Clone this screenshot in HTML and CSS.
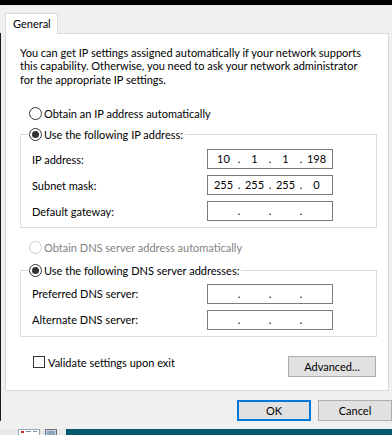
FILE: index.html
```html
<!DOCTYPE html>
<html lang="en">
<head>
<meta charset="utf-8">
<title>IPv4 Properties</title>
<link rel="stylesheet" href="styles.css">
</head>
<body>
<div class="topbar"></div>
<div class="tabs"><div class="tab">General</div></div>
<div class="main">
  <div class="panel">
    <p class="intro">You can get IP settings assigned automatically if your network supports<br>this capability. Otherwise, you need to ask your network administrator<br>for the appropriate IP settings.</p>
    <div class="opt first"><span class="radio"></span><span>Obtain an IP address automatically</span></div>
    <fieldset class="group g1">
      <legend class="opt"><span class="radio on"></span><span>Use the following IP address:</span></legend>
      <div class="row"><span>IP address:</span>
        <div class="ip"><span>10</span><span>.</span><span>1</span><span>.</span><span>1</span><span>.</span><span>198</span></div></div>
      <div class="row"><span>Subnet mask:</span>
        <div class="ip"><span>255</span><span>.</span><span>255</span><span>.</span><span>255</span><span>.</span><span>0</span></div></div>
      <div class="row"><span>Default gateway:</span>
        <div class="ip"><span></span><span>.</span><span></span><span>.</span><span></span><span>.</span><span></span></div></div>
    </fieldset>
    <div class="opt dis"><span class="radio off"></span><span>Obtain DNS server address automatically</span></div>
    <fieldset class="group g2">
      <legend class="opt"><span class="radio on"></span><span>Use the following DNS server addresses:</span></legend>
      <div class="row"><span>Preferred DNS server:</span>
        <div class="ip"><span></span><span>.</span><span></span><span>.</span><span></span><span>.</span><span></span></div></div>
      <div class="row"><span>Alternate DNS server:</span>
        <div class="ip"><span></span><span>.</span><span></span><span>.</span><span></span><span>.</span><span></span></div></div>
    </fieldset>
    <div class="bottomrow">
      <div class="opt check"><span class="box"></span><span>Validate settings upon exit</span></div>
      <button class="btn adv">Advanced...</button>
    </div>
  </div>
  <div class="footer">
    <button class="btn ok">OK</button>
    <button class="btn">Cancel</button>
  </div>
</div>
<div class="taskbar">
  <div class="tb-left">
    <svg class="tb-icon1" width="22" height="6" viewBox="0 0 22 6"><rect x="0.5" y="0.5" width="21" height="6" fill="#fff" stroke="#9aa4b0"/><rect x="3" y="2" width="3" height="2" fill="#c62828"/><rect x="8" y="2" width="5" height="1" fill="#7d8fa3"/><rect x="15" y="2" width="4" height="1" fill="#7d8fa3"/></svg>
    <svg class="tb-icon2" width="12" height="6" viewBox="0 0 12 6"><rect x="0.5" y="0.5" width="11" height="6" fill="#c9d3dc" stroke="#6b7785"/><rect x="2" y="2" width="8" height="4" fill="#8fa7bd"/></svg>
  </div>
  <div class="tb-right"></div>
</div>
</body>
</html>
```
FILE: styles.css
```css
* { box-sizing: border-box; }
html, body { margin: 0; padding: 0; }
body {
  width: 392px;
  height: 435px;
  overflow: hidden;
  background: #f0f0f0;
  font-family: "Lato", "Noto Sans", sans-serif;
  font-size: 11px;
  line-height: 13px;
  color: #000;
}
.topbar { height: 5px; background: #000; }
.tabs { padding: 8px 0 0 5px; display: flex; }
.tab {
  position: relative;
  z-index: 1;
  width: 53px;
  height: 21px;
  margin-bottom: -1px;
  padding: 3px 0 0 7px;
  background: #fff;
  border: 1px solid #d9d9d9;
  border-bottom: none;
}
.main { border-left: 1px solid #1b1b1b; padding-left: 4px; }
.panel {
  width: 384px;
  background: #fff;
  border: 1px solid #d9d9d9;
  padding: 12px 11px 13px 14px;
}
.intro { margin: 0; line-height: 13.4px; white-space: nowrap; }
.opt { display: flex; align-items: center; gap: 2px; height: 13px; white-space: nowrap; }
.first { margin: 21px 0 0 9px; }
.radio {
  width: 13px; height: 13px;
  border: 1px solid #333;
  border-radius: 50%;
  display: inline-flex; align-items: center; justify-content: center;
  background: #fff;
  flex: none;
}
.radio.on::after {
  content: "";
  width: 7px; height: 7px;
  border-radius: 50%;
  background: #333;
}
.radio.off { border-color: #cccccc; }
.dis { color: #838383; margin: 13px 0 0 9px; }
.group {
  margin: 8px 0 0 0;
  border: 1px solid #dcdcdc;
  padding: 8px 0 6px 11px;
  width: 357px;
}
.g2 { margin-top: 10px; padding-top: 6.5px; }
.group legend { padding: 0 2px 0 1px; margin-left: -4px; }
.row {
  display: grid;
  grid-template-columns: 175px 126px;
  align-items: center;
  height: 20px;
  margin-bottom: 6px;
}
.row:last-child { margin-bottom: 0; }
.ip {
  height: 20px;
  border: 1px solid #7a7a7a;
  display: grid;
  grid-template-columns: 25px 6px 25px 6px 25px 6px 25px;
  justify-content: center;
  align-items: center;
  text-align: center;
  line-height: 18px;
}
.bottomrow {
  display: flex;
  justify-content: space-between;
  align-items: flex-start;
  margin-top: 19px;
  padding-left: 13px;
}
.check { gap: 3px; margin-top: 0; }
.box { width: 12px; height: 12px; border: 1px solid #333; background: #fff; flex: none; }
.btn {
  font: inherit;
  color: #000;
  background: #e1e1e1;
  border: 1px solid #adadad;
  height: 21px;
  padding: 0;
  line-height: 17px;
}
.adv { width: 88px; margin-right: 1px; }
.footer {
  display: flex;
  justify-content: flex-end;
  gap: 7px;
  margin-top: 9px;
  padding-right: 0;
}
.footer .btn { width: 74px; }
.ok { border: 2px solid #0078d7; }
.taskbar {
  margin-top: 8px;
  height: 6px;
  display: flex;
}
.tb-left {
  width: 66px;
  background: #e9e9e9;
  display: flex;
  gap: 5px;
  padding-left: 18px;
}
.tb-right { flex: 1; background: #005a6d; }
```
